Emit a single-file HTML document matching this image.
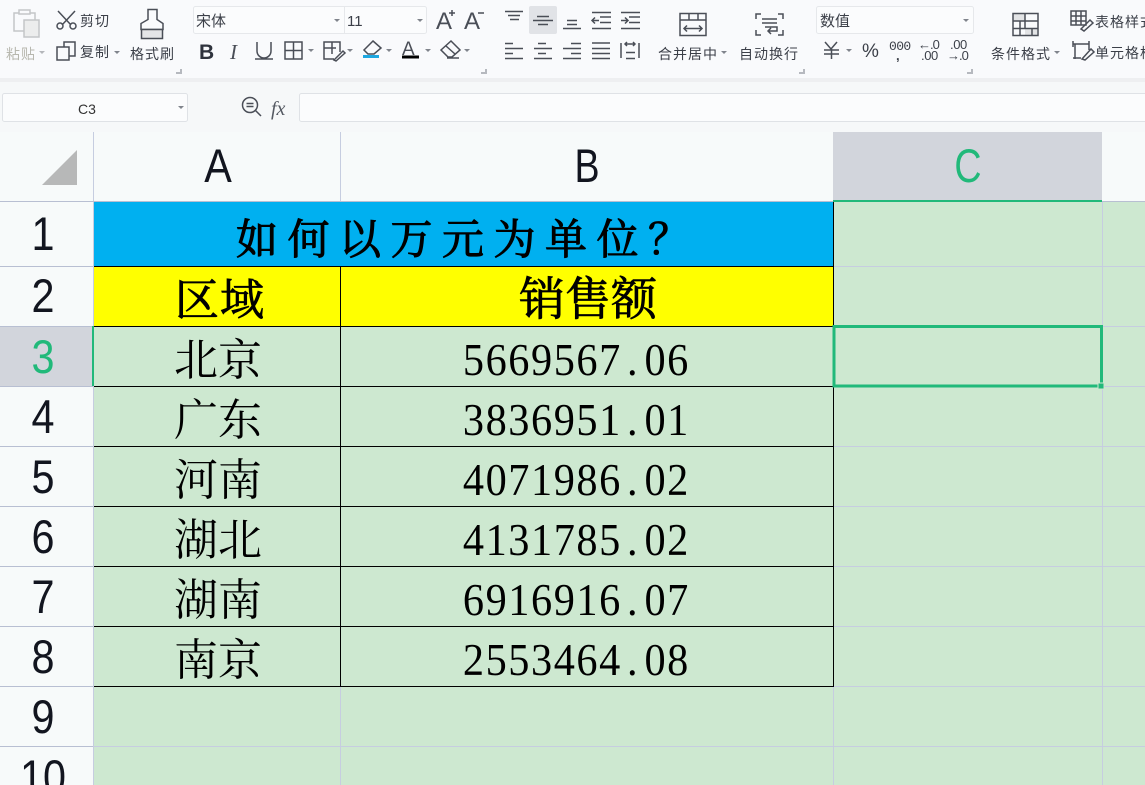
<!DOCTYPE html>
<html><head><meta charset="utf-8"><style>
html,body{margin:0;padding:0;background:#f9fafc}
svg{display:block}
.ui{font-family:"Liberation Sans","Noto Sans CJK SC",sans-serif;font-size:14px;fill:#3b3f48;letter-spacing:1px}
.hd{font-family:"Liberation Sans",sans-serif;font-size:47px;fill:#12151f;text-anchor:middle}
.cj{font-family:"Liberation Serif","Noto Serif CJK SC",serif;font-size:44px;fill:#000}
.bd{stroke:#000;stroke-width:.8px}
.num{font-family:"Liberation Serif",serif;font-size:46px;fill:#000}
.ic{fill:none;stroke:#4a4e57;stroke-width:1.5}
.tri{fill:#80848c}
</style></head><body>
<svg width="1145" height="785" viewBox="0 0 1145 785" xmlns="http://www.w3.org/2000/svg">
<rect width="1145" height="785" fill="#f9fafc"/>
<rect y="78" width="1145" height="4" fill="#eeeff1"/>
<rect y="82" width="1145" height="50" fill="#f6f8f9"/>

<!-- clipboard -->
<g fill="none" stroke="#c4c6c8" stroke-width="1.5">
<path d="M25 31H14V13H35V20"/><rect x="19" y="10" width="11" height="4" fill="#f9fafc"/><rect x="24" y="20" width="15" height="17" fill="#eceded"/>
</g>
<text class="ui" x="6" y="59" style="fill:#b7b7ae">粘贴</text>
<path d="M39 51h6l-3 3z" fill="#b4b6ba"/>
<!-- scissors -->
<g class="ic"><path d="M58 11 71 25M75 11 62 25"/><circle cx="60" cy="26" r="3"/><circle cx="73" cy="26" r="3"/></g>
<text class="ui" x="80" y="26">剪切</text>
<!-- copy -->
<g class="ic"><rect x="64" y="42" width="11" height="14"/><rect x="57" y="47" width="12" height="13" fill="#f9fafc"/></g>
<text class="ui" x="80" y="57">复制</text>
<path class="tri" d="M114 51h6l-3 3z"/>
<!-- format brush -->
<g class="ic"><path d="M148 9.500h9v10l6 4v6h-22v-6l7-4z"/><rect x="141.500" y="29.500" width="21" height="9" fill="#e4e5e7"/></g>
<text class="ui" x="130" y="59">格式刷</text>
<path d="M181 69v4h-5" fill="none" stroke="#b6b9bf" stroke-width="2"/>

<!-- font boxes -->
<rect x="193.500" y="6.500" width="233" height="27" rx="2" fill="#fbfcfd" stroke="#e6e8eb"/>
<path d="M344.500 7v26" stroke="#e6e8eb"/>
<text class="ui" x="196" y="26" style="letter-spacing:0;font-size:15px">宋体</text>
<path class="tri" d="M334 19h6l-3 3z"/>
<text x="347" y="26" style="font:15px 'Liberation Sans',sans-serif;fill:#3b3f48">11</text>
<path class="tri" d="M417 19h6l-3 3z"/>
<!-- B I U -->
<text x="199" y="59" style="font:bold 21px 'Liberation Sans',sans-serif;fill:#2f333d">B</text>
<text x="230" y="59" style="font:italic 21px 'Liberation Serif',serif;fill:#4a4e57">I</text>
<g class="ic"><path d="M257 42v9a7 7 0 0 0 14 0v-9M255 59h18"/>
<rect x="285" y="42" width="17" height="17"/><path d="M293.500 42v17M285 50.500h17"/>
<path d="M340 52V42h-16v17h10M324 48h12M332 42v12M334 60l9-9 2 2-9 8z"/></g>
<path class="tri" d="M308 49h6l-3 3z"/><path class="tri" d="M347 49h6l-3 3z"/>
<g class="ic"><path d="M373 41l8 7-7 6h-6l-4-4z"/></g>
<rect x="363" y="55" width="16" height="3" fill="#1ea7e0"/>
<path class="tri" d="M386 49h6l-3 3z"/>
<text x="402" y="55" style="font:19px 'Liberation Sans',sans-serif;fill:#4a4e57">A</text>
<rect x="402" y="55.500" width="17" height="3" fill="#000"/>
<path class="tri" d="M425 49h6l-3 3z"/>
<g class="ic"><path d="M451 41l9 9-8 7h-4l-7-7zM446 46l9 8M447 58h12"/></g>
<path class="tri" d="M464 49h6l-3 3z"/>
<!-- A+ A- -->
<text x="436" y="29" style="font:24px 'Liberation Sans',sans-serif;fill:#4a4e57">A</text>
<text x="464" y="29" style="font:24px 'Liberation Sans',sans-serif;fill:#4a4e57">A</text>
<path d="M449 13h6M452 10v6M478 13h6" stroke="#4a4e57" stroke-width="1.500"/>
<path d="M486 69v4h-5" fill="none" stroke="#b6b9bf" stroke-width="2"/>

<!-- alignment -->
<rect x="529" y="6" width="28" height="28" rx="2" fill="#e1e3e7"/>
<g class="ic">
<path d="M505 11.500h18M508 15.500h12M510 19.500h9"/>
<path d="M533 20.500h20M537 16.500h12M538 24.500h10"/>
<path d="M563 28.500h18M567 24.500h10M567 20.500h10"/>
<path d="M592 12.500h19M600 17h11M600 22.500h11M592 28.500h19M599 20.500h-7m3-3-3 3 3 3"/>
<path d="M621 12.500h19M629 17h11M629 22.500h11M621 28.500h19M621 20.500h7m-3-3 3 3-3 3"/>
<path d="M505 43.500h8M505 48.500h18M505 53.500h8M505 58.500h18"/>
<path d="M538 43.500h8M534 48.500h18M538 53.500h8M534 58.500h18"/>
<path d="M571 43.500h10M563 48.500h18M571 53.500h10M563 58.500h18"/>
<path d="M592 43h18M592 48.500h18M592 53.500h18M592 58.500h18"/>
<path d="M621 43v15M639 43v15M626 52.500h9M626 58.500h9M625 44h10m-8-2-2 2 2 2m6-4 2 2-2 2"/>
</g>
<!-- merge -->
<g class="ic"><rect x="680" y="13.500" width="26" height="22"/><path d="M680 20h26M689 14v6M698 14v6M684 28.500h18m-15-3-3 3 3 3m12-6 3 3-3 3"/></g>
<text class="ui" x="658" y="59" style="letter-spacing:1px">合并居中</text>
<path class="tri" d="M721 51h6l-3 3z"/>
<!-- wrap -->
<g class="ic"><path d="M761 14h-5v5M778 14h5v5M761 35h-5v-5M778 35h5v-5M762 19h15M762 23h15M765 27h12v4h-9m3-3-3 3 3 3"/></g>
<text class="ui" x="739" y="59" style="letter-spacing:1px">自动换行</text>
<path d="M804 69v4h-5" fill="none" stroke="#b6b9bf" stroke-width="2"/>

<!-- number format -->
<rect x="816.500" y="6.500" width="157" height="27" rx="2" fill="#fbfcfd" stroke="#e6e8eb"/>
<text class="ui" x="820" y="26" style="letter-spacing:0;font-size:15px">数值</text>
<path class="tri" d="M963 19h6l-3 3z"/>
<g class="ic"><path d="M825 42l6 7 6-7M824 50h15M824 54h15M831.500 49v10"/></g>
<path class="tri" d="M846 49h6l-3 3z"/>
<text x="862" y="57" style="font:19px 'Liberation Sans',sans-serif;fill:#3b3f48">%</text>
<text x="889" y="50" style="font:13px 'Liberation Mono',monospace;fill:#3b3f48;letter-spacing:-.6px">000</text>
<text x="896" y="60" style="font:bold 13px 'Liberation Sans',sans-serif;fill:#3b3f48">,</text>
<text x="918" y="49" style="font:13px 'Liberation Sans',sans-serif;fill:#3b3f48;letter-spacing:-1px">←.0</text>
<text x="921" y="60" style="font:13px 'Liberation Sans',sans-serif;fill:#3b3f48;letter-spacing:-.4px">.00</text>
<text x="950" y="49" style="font:13px 'Liberation Sans',sans-serif;fill:#3b3f48;letter-spacing:-.4px">.00</text>
<text x="947" y="60" style="font:13px 'Liberation Sans',sans-serif;fill:#3b3f48;letter-spacing:-1px">→.0</text>
<path d="M972 69v4h-5" fill="none" stroke="#b6b9bf" stroke-width="2"/>
<!-- cond format -->
<rect x="1013" y="14" width="12" height="7" fill="#e2e3e5"/><rect x="1025" y="28" width="12" height="7" fill="#e2e3e5"/>
<g class="ic"><rect x="1013" y="13.500" width="25" height="22"/><path d="M1013 21h12M1013 28.500h25M1025 21h13M1020 21v15M1025 14v15M1032 29v7"/></g>
<text class="ui" x="991" y="59" style="letter-spacing:1px">条件格式</text>
<path class="tri" d="M1054 51h6l-3 3z"/>
<g class="ic"><rect x="1071" y="11" width="15" height="14"/><path d="M1076 11v14M1081 11v14M1071 16h15M1071 21h15M1081 29l9-9 3 3-9 8z"/></g>
<text class="ui" x="1095" y="27" style="letter-spacing:1px">表格样式</text>
<g class="ic"><path d="M1073 44h16M1073 58h8M1075 44v15M1089 42v8M1073 41v6M1089 41v6M1082 59l9-10 3 3-9 8z"/></g>
<text class="ui" x="1095" y="58" style="letter-spacing:1px">单元格格</text>

<!-- formula bar -->
<rect x="2.500" y="93.500" width="185" height="28" rx="2" fill="#fbfcfd" stroke="#dfe2e6"/>
<text x="78" y="114" style="font:14px 'Liberation Sans',sans-serif;fill:#333">C3</text>
<path class="tri" d="M178 106h6l-3 3z"/>
<g class="ic"><circle cx="250" cy="105" r="7.500"/><path d="M246.500 103.500h7M246.500 106.500h7M255 110l6 6"/></g>
<text x="271" y="115" style="font:italic 20px 'Liberation Serif',serif;fill:#555a63">fx</text>
<rect x="299.500" y="93.500" width="860" height="28" rx="2" fill="#fbfcfd" stroke="#dfe2e6"/>

<!-- sheet headers -->
<rect y="132" width="1145" height="653" fill="#f7fafa"/>
<path d="M77 150v35H42z" fill="#b7b8b8"/>
<rect x="833" y="132" width="269" height="69" fill="#d2d5dc"/>
<rect x="0" y="326" width="93" height="60" fill="#d2d5dc"/>

<!-- sheet body -->
<rect x="94" y="201" width="1051" height="584" fill="#cde8d0"/>
<rect x="94" y="202" width="739" height="64" fill="#00b0f0"/>
<rect x="94" y="267" width="739" height="59" fill="#ffff00"/>

<!-- light grid -->
<g stroke="#c6cde0" stroke-width="1">
<path d="M93.500 132V785M340.500 132V201M340.500 687V785M1102.500 201V785"/>
<path d="M834 266.500H1145M834 326.500H1145M834 386.500H1145M834 446.500H1145M834 506.500H1145M834 566.500H1145M834 626.500H1145M834 686.500H1145M94 746.500H1145M833.500 687V785"/>
<path d="M0 201.500H1145M0 266.500H93M0 326.500H93M0 386.500H93M0 446.500H93M0 506.500H93M0 566.500H93M0 626.500H93M0 686.500H93M0 746.500H93" stroke="#b8bfd2"/>
</g>
<!-- black grid -->
<g stroke="#000" stroke-width="1">
<path d="M94 266.500H834M94 326.500H834M94 386.500H834M94 446.500H834M94 506.500H834M94 566.500H834M94 626.500H834M94 686.500H834"/>
<path d="M340.500 266V687M833.500 201V687"/>
</g>

<!-- header labels -->
<text class="hd" transform="translate(218 182) scale(.88 1)">A</text>
<text class="hd" transform="translate(587 182) scale(.8 1)">B</text>
<text class="hd" transform="translate(968 182) scale(.8 1)" style="fill:#21b97a">C</text>
<text class="hd" transform="translate(43 250) scale(.88 1)">1</text>
<text class="hd" transform="translate(43 312) scale(.88 1)">2</text>
<text class="hd" transform="translate(43 373) scale(.88 1)" style="fill:#21b97a">3</text>
<text class="hd" transform="translate(43 433) scale(.88 1)">4</text>
<text class="hd" transform="translate(43 493) scale(.88 1)">5</text>
<text class="hd" transform="translate(43 553) scale(.88 1)">6</text>
<text class="hd" transform="translate(43 613) scale(.88 1)">7</text>
<text class="hd" transform="translate(43 673) scale(.88 1)">8</text>
<text class="hd" transform="translate(43 733) scale(.88 1)">9</text>
<text class="hd" transform="translate(43 793) scale(.88 1)">10</text>

<!-- selection -->
<rect x="92" y="326" width="2" height="60" fill="#21b97a"/>
<rect x="833" y="200" width="269" height="2" fill="#21b97a"/>
<rect x="834" y="326.500" width="267.500" height="59.500" fill="none" stroke="#21b97a" stroke-width="3"/>
<rect x="1098" y="383" width="6" height="6" fill="#21b97a" stroke="#cde8d0"/>

<!-- cell text -->
<text class="cj bd" x="236" y="254" style="font-size:42px;letter-spacing:9.500px;stroke-width:1px">如何以万元为单位？</text>
<text class="cj bd" x="175" y="315" style="letter-spacing:1px">区域</text>
<text class="cj bd" x="519" y="315" style="font-size:46px">销售额</text>
<text class="cj" x="174" y="375">北京</text>
<text class="cj" x="174" y="435">广东</text>
<text class="cj" x="174" y="495">河南</text>
<text class="cj" x="174" y="555">湖北</text>
<text class="cj" x="174" y="615">湖南</text>
<text class="cj" x="174" y="675">南京</text>

<g transform="translate(462 0) scale(.92 1)">
<text class="num" y="375" x="1 25.7 50.3 75 99.7 124.4 149 179.3 198.4 223">5669567.06</text>
<text class="num" y="435" x="1 25.7 50.3 75 99.7 124.4 149 179.3 198.4 223">3836951.01</text>
<text class="num" y="495" x="1 25.7 50.3 75 99.7 124.4 149 179.3 198.4 223">4071986.02</text>
<text class="num" y="555" x="1 25.7 50.3 75 99.7 124.4 149 179.3 198.4 223">4131785.02</text>
<text class="num" y="615" x="1 25.7 50.3 75 99.7 124.4 149 179.3 198.4 223">6916916.07</text>
<text class="num" y="675" x="1 25.7 50.3 75 99.7 124.4 149 179.3 198.4 223">2553464.08</text>
</g>
</svg>
</body></html>
